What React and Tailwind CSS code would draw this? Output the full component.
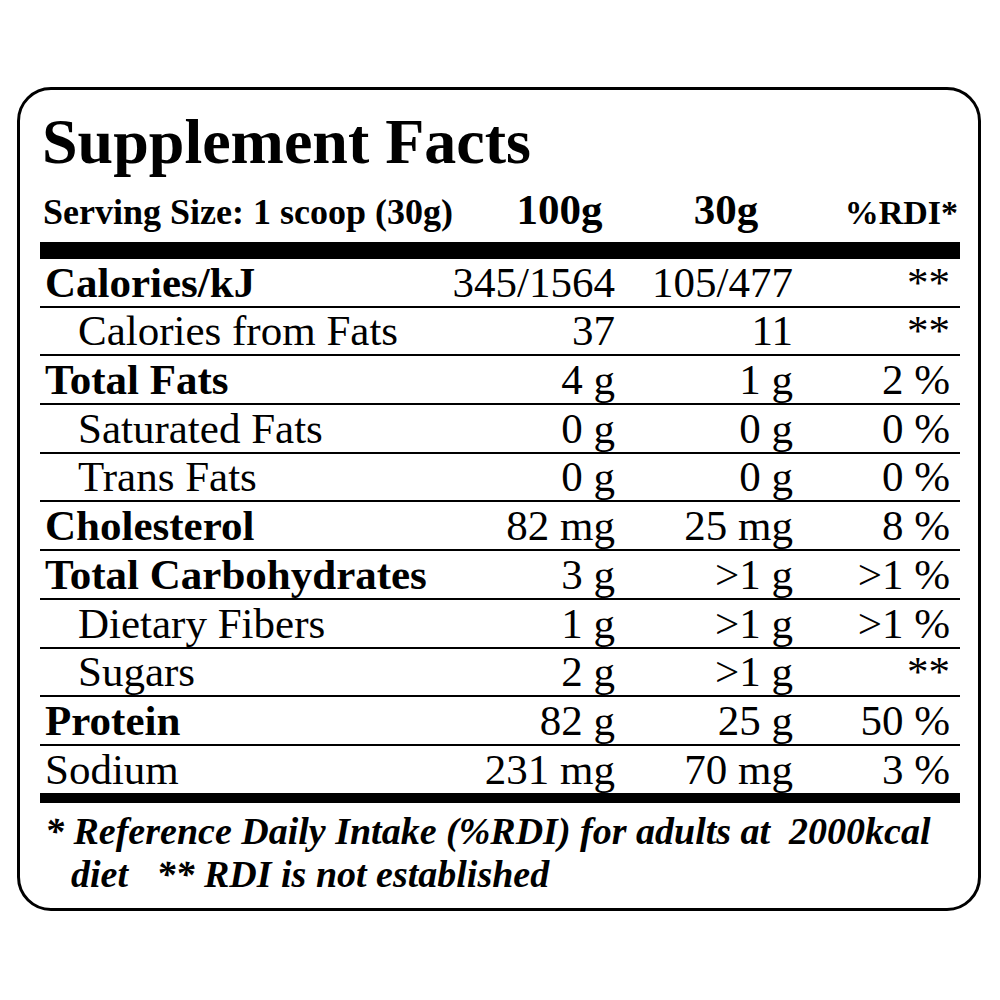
const rows = [
  { label: "Calories/kJ", bold: true, a: "345/1564", b: "105/477", c: "**" },
  { label: "Calories from Fats", indent: true, a: "37", b: "11", c: "**" },
  { label: "Total Fats", bold: true, a: "4 g", b: "1 g", c: "2 %" },
  { label: "Saturated Fats", indent: true, a: "0 g", b: "0 g", c: "0 %" },
  { label: "Trans Fats", indent: true, a: "0 g", b: "0 g", c: "0 %" },
  { label: "Cholesterol", bold: true, a: "82 mg", b: "25 mg", c: "8 %" },
  { label: "Total Carbohydrates", bold: true, a: "3 g", b: ">1 g", c: ">1 %" },
  { label: "Dietary Fibers", indent: true, a: "1 g", b: ">1 g", c: ">1 %" },
  { label: "Sugars", indent: true, a: "2 g", b: ">1 g", c: "**" },
  { label: "Protein", bold: true, a: "82 g", b: "25 g", c: "50 %" },
  { label: "Sodium", a: "231 mg", b: "70 mg", c: "3 %" },
];

export default function App() {
  return (
    <div className="min-h-[1000px] bg-white pt-[87px] pl-[17px] font-['Liberation_Serif',serif] text-black">
      <div className="w-[964px] h-[824px] border-[3px] border-black rounded-[34px] pt-[20px] pl-[20px] pr-[18px]">

        {/* TITLE */}
        <div className="pl-[2px] text-[64px] font-bold leading-none whitespace-nowrap">
          Supplement Facts
        </div>

        {/* HEADER */}
        <div className="mt-[14px] flex items-baseline font-bold leading-none whitespace-nowrap">
          <div className="flex-1 pl-[3px] text-[36px]">Serving Size: 1 scoop (30g)</div>
          <div className="w-[163px] pr-[10px] text-right text-[43px]">100g</div>
          <div className="w-[155px] pr-[6px] text-right text-[43px]">30g</div>
          <div className="w-[200px] pr-[2px] text-right text-[34px]">%RDI*</div>
        </div>
        <div className="mt-[11px] h-[17px] bg-black" />

        {/* ROWS */}
        {rows.map((r, i) => {
          const last = i === rows.length - 1;
          return (
            <div
              key={r.label}
              className={
                "grid grid-cols-[1fr_180px_178px_157px] pr-[10px] items-end pb-[2px] text-[43px] leading-none whitespace-nowrap " +
                (last ? "h-[47px]" : "h-[48.7px] border-b-2 border-black")
              }
            >
              <div className={(r.indent ? "pl-[38px]" : "pl-[5px]") + (r.bold ? " font-bold" : "")}>
                {r.label}
              </div>
              <div className="text-right">{r.a}</div>
              <div className="text-right">{r.b}</div>
              <div className="text-right">{r.c}</div>
            </div>
          );
        })}
        <div className="h-[10px] bg-black" />

        {/* FOOTNOTE */}
        <div className="mt-[7px] pl-[5px] text-[38px] leading-[43px] font-bold italic whitespace-pre">
          <div>* Reference Daily Intake (%RDI) for adults at  2000kcal</div>
          <div className="pl-[26px]">diet   ** RDI is not established</div>
        </div>

      </div>
    </div>
  );
}
